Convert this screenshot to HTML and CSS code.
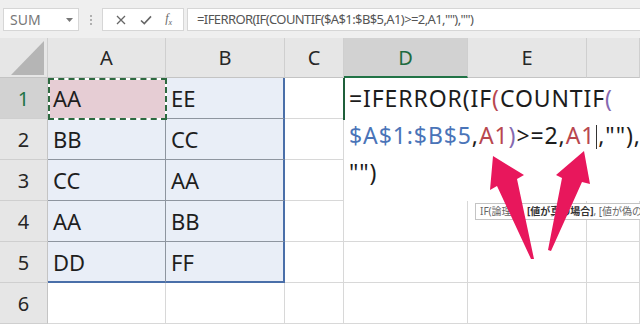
FILE: index.html
```html
<!DOCTYPE html>
<html lang="ja">
<head>
<meta charset="utf-8">
<title>Excel IFERROR COUNTIF</title>
<link rel="stylesheet" href="styles.css">
</head>
<body>
<div class="app">
  <div class="toolbar">
    <div class="namebox">
      <span class="name">SUM</span>
      <svg class="caret-ico" width="7" height="4" viewBox="0 0 7 4"><path d="M0 0h7L3.5 4z" fill="#777"/></svg>
    </div>
    <div class="grip"><i></i><i></i><i></i></div>
    <div class="fnbox">
      <svg width="10" height="10" viewBox="0 0 10 10"><path d="M1 1L9 9M9 1L1 9" stroke="#666" stroke-width="1.3" fill="none"/></svg>
      <svg width="12" height="10" viewBox="0 0 12 10"><path d="M1 5.5L4.3 8.6L11 1.4" stroke="#666" stroke-width="1.6" fill="none"/></svg>
      <span class="fx">f<sub>x</sub></span>
    </div>
    <div class="formula">=IFERROR(IF(COUNTIF($A$1:$B$5,A1)&gt;=2,A1,""),"")</div>
  </div>

  <div class="sheet">
    <div class="corner"><span class="tri"></span></div>
    <div class="ch">A</div>
    <div class="ch">B</div>
    <div class="ch">C</div>
    <div class="ch ch-active">D</div>
    <div class="ch">E</div>
    <div class="ch"></div>

    <div class="rh rh-active">1</div>
    <div class="c sel a1">AA</div>
    <div class="c sel selr">EE</div>
    <div class="c"></div><div class="c"></div><div class="c"></div><div class="c"></div>

    <div class="rh">2</div>
    <div class="c sel">BB</div>
    <div class="c sel selr">CC</div>
    <div class="c"></div><div class="c"></div><div class="c"></div><div class="c"></div>

    <div class="rh">3</div>
    <div class="c sel">CC</div>
    <div class="c sel selr">AA</div>
    <div class="c"></div><div class="c"></div><div class="c"></div><div class="c"></div>

    <div class="rh">4</div>
    <div class="c sel">AA</div>
    <div class="c sel selr">BB</div>
    <div class="c"></div><div class="c"></div><div class="c"></div><div class="c"></div>

    <div class="rh">5</div>
    <div class="c sel selb">DD</div>
    <div class="c sel selr selb">FF</div>
    <div class="c"></div><div class="c"></div><div class="c"></div><div class="c"></div>

    <div class="rh">6</div>
    <div class="c"></div><div class="c"></div><div class="c"></div><div class="c"></div><div class="c"></div><div class="c"></div>

    <div class="ants"></div>
    <div class="editor">
      <div class="ln">=IFERROR(IF<span class="r">(</span>COUNTIF<span class="p">(</span></div>
      <div class="ln"><span class="b">$A$1:$B$5</span>,<span class="r">A1</span><span class="p">)</span>&gt;=2,<span class="r">A1</span><span class="cur"></span>,""),</div>
      <div class="ln">"")</div>
    </div>
    <div class="tip">IF(論理式, <b>[値が真の場合]</b>, [値が偽の場合])</div>
  </div>

  <svg class="arrows" width="640" height="326" viewBox="0 0 640 326">
    <path d="M493 156 L524 175 L517 179 L534 259 L531 259 L497 186 L490 190 Z" fill="#e8175c"/>
    <path d="M584 151 L590 184 L582 182 L551 251 L548 250 L562 178 L556 175 Z" fill="#e8175c"/>
  </svg>
</div>
</body>
</html>
```

FILE: styles.css
```css
* { box-sizing: border-box; }
html, body { margin: 0; padding: 0; }
body {
  width: 640px;
  height: 326px;
  overflow: hidden;
  background: #fff;
  font-family: "Noto Sans", "Noto Sans CJK JP", sans-serif;
}
.app { position: relative; width: 640px; height: 326px; overflow: hidden; }

.toolbar {
  display: flex;
  align-items: flex-start;
  height: 38px;
  padding: 8px 0 0 3px;
  background: #efefef;
}
.namebox {
  width: 76px;
  height: 23px;
  background: #fff;
  border: 1px solid #d6d6d6;
  display: flex;
  align-items: center;
  justify-content: space-between;
  padding: 0 5px 0 6px;
}
.name { font-size: 14px; color: #777; }
.grip {
  width: 8px;
  margin-left: 8px;
  height: 23px;
  display: flex;
  flex-direction: column;
  align-items: center;
  justify-content: center;
  gap: 2px;
}
.grip i { display: block; width: 2px; height: 2px; background: #b0b0b0; }
.fnbox {
  margin-left: 7px;
  width: 82px;
  height: 23px;
  background: #fff;
  border: 1px solid #d6d6d6;
  display: flex;
  align-items: center;
  justify-content: space-around;
  padding: 0 4px 0 6px;
}
.fx { font-family: "Liberation Serif", serif; font-style: italic; font-size: 12px; color: #666; }
.fx sub { font-size: 8px; }
.formula {
  flex: 1;
  margin-left: 3px;
  height: 23px;
  background: #fff;
  border: 1px solid #d6d6d6;
  border-right: 0;
  padding-left: 9px;
  font-size: 13px;
  line-height: 21px;
  color: #555;
  white-space: nowrap;
  letter-spacing: -0.6px;
}

.sheet {
  position: relative;
  display: grid;
  grid-template-columns: 48px 118px 119px 59px 124px 119px 53px;
  grid-template-rows: 40px repeat(6, 41px);
}
.corner {
  position: relative;
  background: #e6e6e6;
  border-right: 1px solid #cfcfcf;
  border-bottom: 1px solid #c4c4c4;
}
.tri {
  position: absolute;
  right: 3px;
  bottom: 2px;
  width: 0; height: 0;
  border-left: 33px solid transparent;
  border-bottom: 34px solid #b5b5b5;
}
.ch {
  background: #e6e6e6;
  border-right: 1px solid #cfcfcf;
  border-bottom: 1px solid #c4c4c4;
  display: flex;
  align-items: center;
  justify-content: center;
  font-size: 20px;
  color: #262626;
}
.ch-active {
  background: #d2d2d2;
  color: #1e6b3e;
  border-bottom: 2px solid #217346;
}
.rh {
  background: #e6e6e6;
  border-right: 1px solid #c4c4c4;
  border-bottom: 1px solid #cfcfcf;
  display: flex;
  align-items: center;
  justify-content: center;
  font-size: 20px;
  color: #262626;
}
.rh-active { background: #d2d2d2; color: #217346; }
.c {
  border-right: 1px solid #d8d8d8;
  border-bottom: 1px solid #d8d8d8;
  display: flex;
  align-items: center;
  padding-left: 5px;
  font-size: 22px;
  color: #1e1e1e;
}
.sel { background: #e9eef7; border-color: #8e959f; }
.selr { border-right: 2px solid #4a6fa9; }
.selb { border-bottom: 2px solid #4a6fa9; }
.a1 { background: #e6cdd4; }

.ants {
  position: absolute;
  left: 48px;
  top: 40px;
  width: 119px;
  height: 42px;
  border: 2px solid #fff;
}
.ants::after {
  content: "";
  position: absolute;
  inset: -2px;
  border: 2px dashed #2d6a40;
}

.editor {
  position: absolute;
  left: 344px;
  top: 40px;
  width: 296px;
  height: 123px;
  background: #fff;
  padding: 2px 0 0 5px;
  font-size: 23px;
  line-height: 37px;
  letter-spacing: 0.9px;
  color: #1c1c1c;
}
.editor::before {
  content: "";
  position: absolute;
  left: -1px;
  top: 0;
  width: 2px;
  height: 42px;
  background: #1f5f3a;
}
.ln { white-space: nowrap; }
.r { color: #b8474f; }
.p { color: #8569b0; }
.b { color: #4a74b8; }
.cur {
  display: inline-block;
  width: 1px;
  height: 24px;
  background: #333;
  vertical-align: -5px;
  margin: 0 1px;
}

.tip {
  position: absolute;
  left: 475px;
  top: 165px;
  height: 17px;
  padding: 0 4px;
  background: #fff;
  border: 1px solid #c4c4c4;
  font-size: 10px;
  line-height: 15px;
  color: #666;
  white-space: nowrap;
}
.tip b { color: #333; font-weight: 700; }

.arrows { position: absolute; left: 0; top: 0; pointer-events: none; }
```
